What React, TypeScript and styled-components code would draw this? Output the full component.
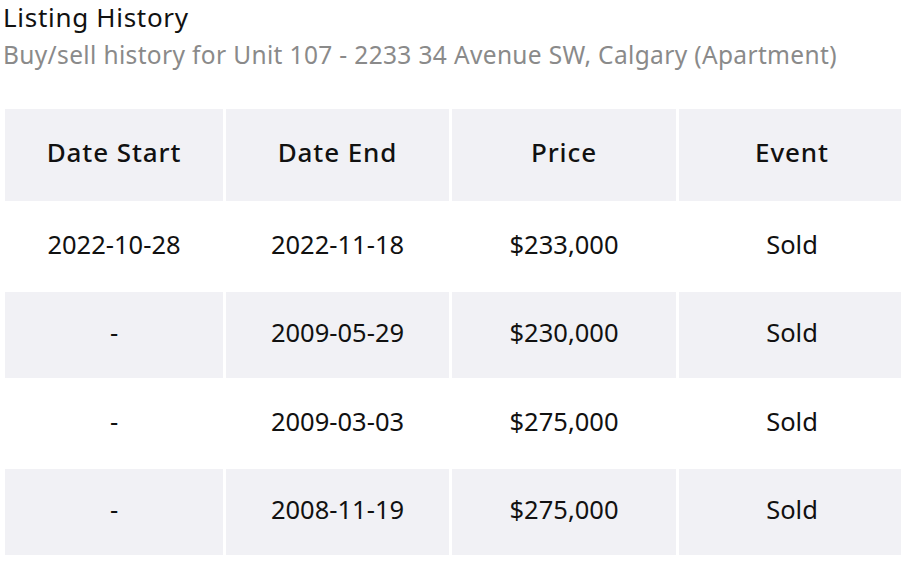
import React from "react";
import styled, { createGlobalStyle } from "styled-components";

const Global = createGlobalStyle`
  html, body { margin: 0; padding: 0; background: #fff; overflow: hidden; }
  body { font-family: "Noto Sans", "Open Sans", sans-serif; color: #111; }
`;

const Page = styled.div`
  width: 901px;
  height: 577px;
  overflow: hidden;
  padding: 0 0 0 2px;
  box-sizing: border-box;
`;

const Title = styled.h2`
  margin: 0;
  padding: 0 0 0 1px;
  font-size: 26px;
  font-weight: 400;
  letter-spacing: 0.7px;
  line-height: 34px;
  color: #111;
`;

const Subtitle = styled.p`
  margin: 0;
  padding: 0 0 0 1px;
  font-size: 24.5px;
  font-weight: 400;
  letter-spacing: 0.35px;
  line-height: 41px;
  color: #8a8a8a;
  white-space: nowrap;
`;

const Table = styled.table`
  margin-top: 31px;
  width: 906px;
  border-collapse: separate;
  border-spacing: 3px;
  table-layout: fixed;
`;

const HeadCell = styled.th`
  box-sizing: border-box;
  height: 92px;
  padding: 0 0 6px;
  background: #f1f1f5;
  font-size: 26px;
  font-weight: 500;
  letter-spacing: 0.9px;
  color: #111;
  text-align: center;
  vertical-align: middle;
`;

const Row = styled.tr<{ $shaded: boolean }>`
  td { background: ${(p) => (p.$shaded ? "#f1f1f5" : "#fff")}; }
`;

const Cell = styled.td<{ $tall: boolean }>`
  box-sizing: border-box;
  height: ${(p) => (p.$tall ? 85 : 86)}px;
  padding: 0 0 6px;
  font-size: 25.5px;
  font-weight: 400;
  color: #111;
  text-align: center;
  vertical-align: middle;
`;

const rows = [
  ["2022-10-28", "2022-11-18", "$233,000", "Sold"],
  ["-", "2009-05-29", "$230,000", "Sold"],
  ["-", "2009-03-03", "$275,000", "Sold"],
  ["-", "2008-11-19", "$275,000", "Sold"],
];

const widths = [218, 223, 224, 226];

export default function App() {
  return (
    <Page>
      <Global />
      <Title>Listing History</Title>
      <Subtitle>Buy/sell history for Unit 107 - 2233 34 Avenue SW, Calgary (Apartment)</Subtitle>
      <Table>
        <colgroup>
          {widths.map((w, i) => (
            <col key={i} style={{ width: w }} />
          ))}
        </colgroup>
        <thead>
          <tr>
            <HeadCell>Date Start</HeadCell>
            <HeadCell>Date End</HeadCell>
            <HeadCell>Price</HeadCell>
            <HeadCell>Event</HeadCell>
          </tr>
        </thead>
        <tbody>
          {rows.map((r, i) => (
            <Row key={i} $shaded={i % 2 === 1}>
              {r.map((c, j) => (
                <Cell key={j} $tall={i % 2 === 0}>
                  {c}
                </Cell>
              ))}
            </Row>
          ))}
        </tbody>
      </Table>
    </Page>
  );
}
